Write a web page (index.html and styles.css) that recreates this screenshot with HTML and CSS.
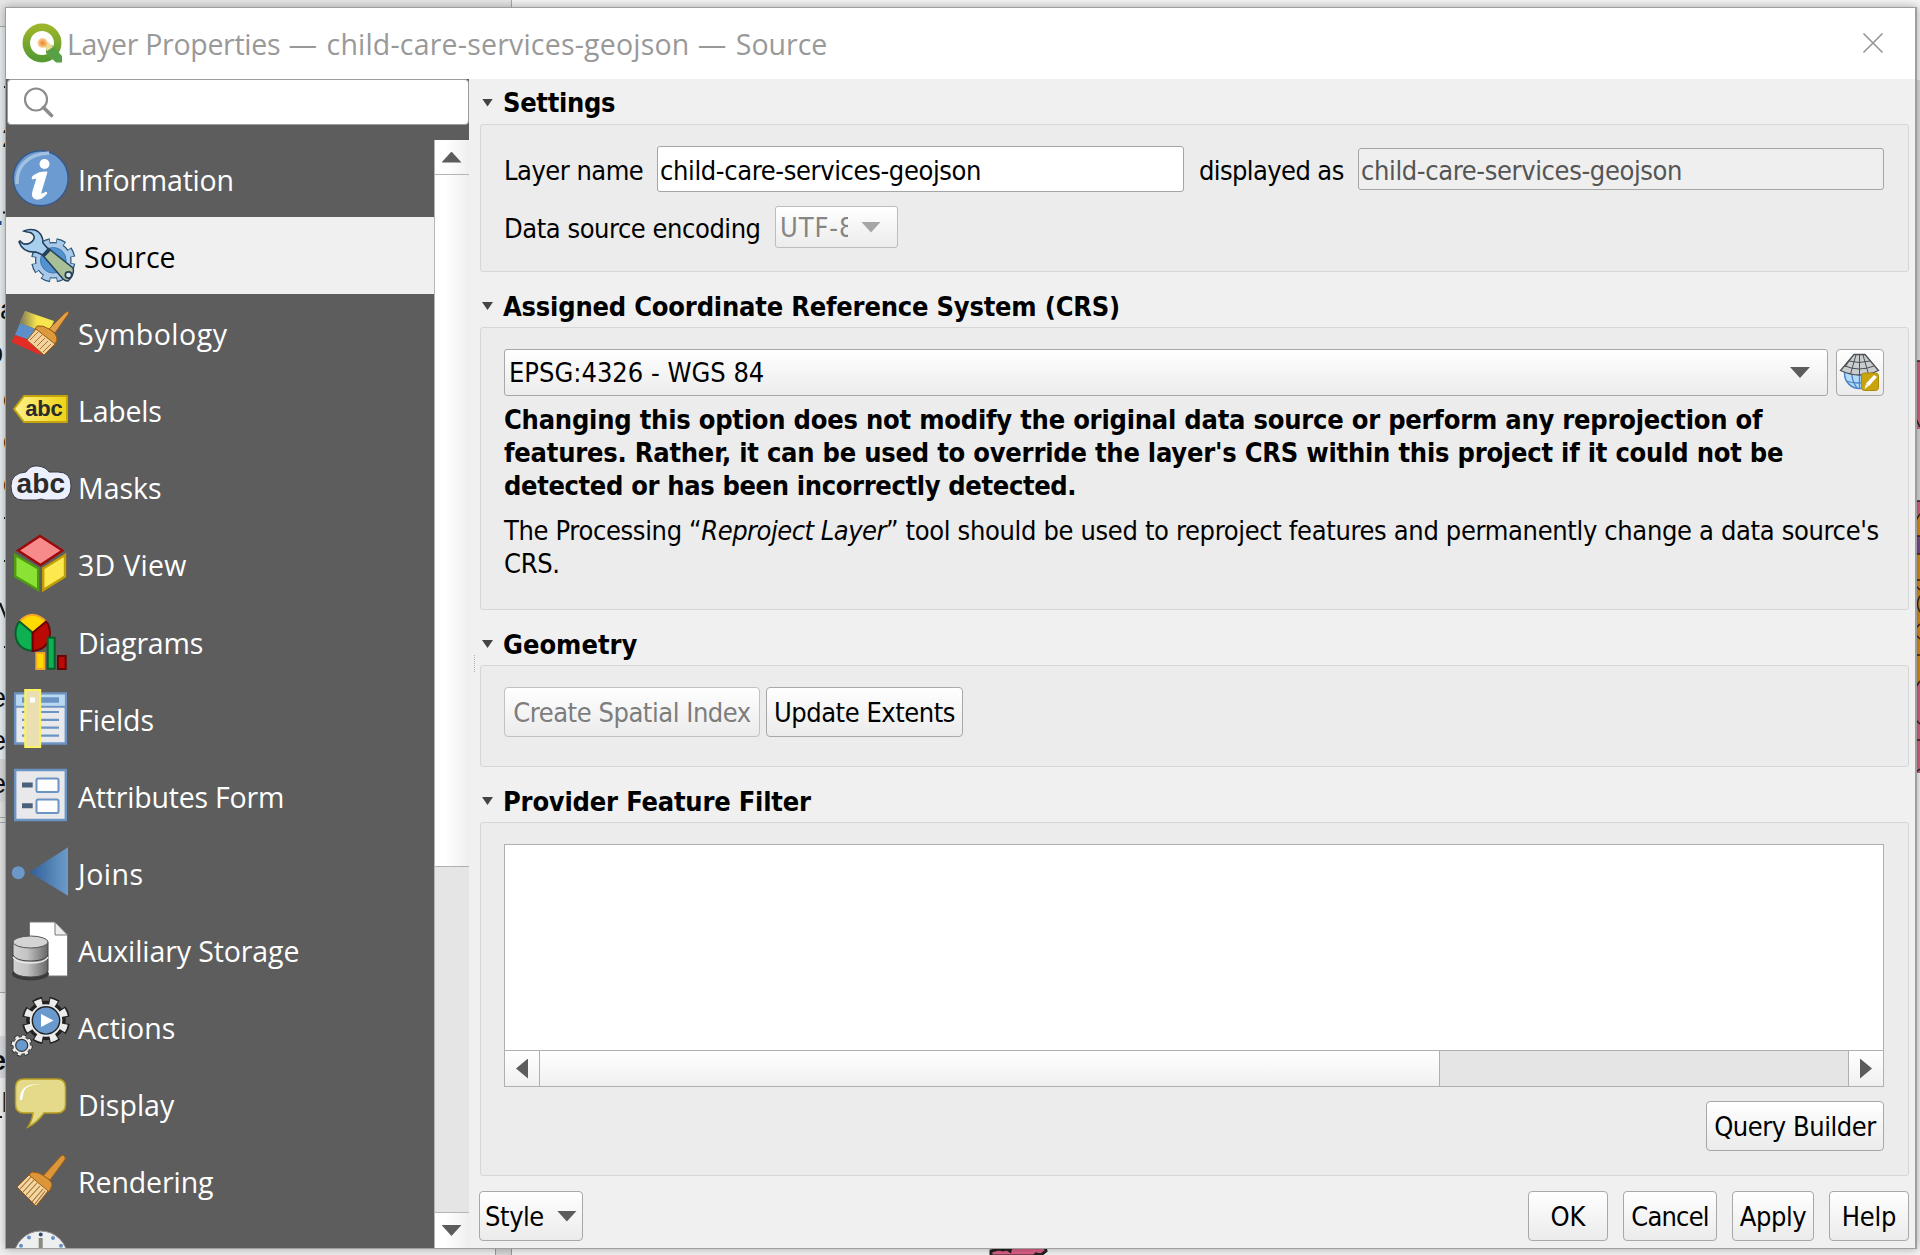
FILE: index.html
```html
<!DOCTYPE html>
<html lang="en">
<head>
<meta charset="utf-8">
<title>Layer Properties</title>
<link rel="stylesheet" href="styles.css">
</head>
<body>
<div class="desktop">
  <svg class="backdrop" width="1920" height="1255" viewBox="0 0 1920 1255">
    <rect width="1920" height="1255" fill="#f4f4f4"/>
    <rect width="511" height="26" fill="#e6e6e6"/>
    <path d="M0 26.500H511M511.500 0V26" stroke="#a8a8a8"/>
    <rect y="27" width="6" height="740" fill="#e9eff2"/>
    <rect y="759" width="6" height="43" fill="#dcdcdc"/>
    <rect y="802" width="6" height="190" fill="#e6e6e6"/>
    <path d="M0 817.500H6M0 822.500H6M0 992.500H6" stroke="#aaa"/>
    <rect y="1036" width="6" height="42" fill="#dcdde2"/>
    <path d="M4 87h2M3 212.500h3M4 518h2M4 561h2M4 647h2M0 1117h2" stroke="#1a1a1a" stroke-width="2"/>
    <path d="M0 223h1.500" stroke="#1d4e89" stroke-width="4"/>
    <path d="M0 603l6 15" stroke="#1a1a1a" stroke-width="2.200"/>
    <path d="M4.500 1092v20" stroke="#3a2a22" stroke-width="2"/>
    <path d="M0 1248H495V1255H0z" fill="#f0f0f0"/>
    <path d="M495 1248h16v7h-16z" fill="#d8d8d8"/>
    <path d="M495.500 1248v7M511.500 1248v7" stroke="#999"/>
    <path d="M991 1256l0-5 8-2 4 1 4-1 3 2 1-4h34l1 4-5 4-5-1-2 2z" fill="#db6186" stroke="#222" stroke-width="3"/>
    <rect x="1916" y="80" width="4" height="280" fill="#dadddd"/>
    <rect x="1916" y="361" width="4" height="412" fill="#d4607f"/>
    <rect x="1916" y="429" width="4" height="72" fill="#d3dad8"/>
    <rect x="1916" y="502" width="4" height="180" fill="#d58a1b"/>
    <rect x="1916" y="502" width="4" height="12" fill="#d4607f"/>
    <rect x="1916" y="536" width="4" height="18" fill="#7a4a92"/>
    <path d="M1916 361h4M1916 419l4 8M1916 501h4M1916 520l4-6M1916 536h4M1916 554h4M1916 580h4M1916 586l4 4M1920 596q-5 8 0 16M1916 628l4-4M1916 635l4 4M1916 655h4M1916 687l4-6M1916 720l4 4M1916 740h4M1916 772l4-3" stroke="#33231a" stroke-width="1.500" fill="none"/>
  </svg>
  <div class="peek">
    <span style="top:121px;left:2px">2</span>
    <span style="top:293px;left:0">a</span><span style="top:336px;left:-12px">p</span>
    <span style="top:382px;left:3px">c</span><span style="top:424px;left:3px">c</span><span style="top:467px;left:3px">c</span>
    <span style="top:681px;left:-9px">e</span><span style="top:724px;left:-9px">e</span><span style="top:767px;left:-9px">e</span><span style="top:1044px;left:-9px" class="strong">e</span>
  </div>
</div>

<main class="dialog">
  <header class="titlebar">
    <svg class="logo" width="42" height="42" viewBox="0 0 42 42">
      <defs><linearGradient id="q" x1="0" y1="0" x2="0" y2="1"><stop offset="0" stop-color="#9bb52a"/><stop offset="1" stop-color="#569b32"/></linearGradient>
      <radialGradient id="o"><stop offset="0" stop-color="#ee7925"/><stop offset="1" stop-color="#f6b65c" stop-opacity=".6"/></radialGradient></defs>
      <circle cx="21" cy="20" r="15.700" fill="none" stroke="url(#q)" stroke-width="7.500"/>
      <path d="M21 24l5-5 15 14v7h-6z" fill="#fff"/>
      <path d="M25 24.500l6-2.500 10 11V39.500h-6L25 30z" fill="#57a045"/>
      <path d="M22 21l5-2 5 5-6 4z" fill="#f0dc98"/>
      <circle cx="21.500" cy="20" r="5" fill="url(#o)"/>
    </svg>
    <h1 class="title"><span class="t-name">Layer Properties</span><span class="t-dash"> — </span><span class="t-layer">child-care-services-geojson</span><span class="t-dash"> — </span>Source</h1>
    <svg class="close" width="22" height="22" viewBox="0 0 22 22"><path d="M1.500 1.500l19 19M20.500 1.500l-19 19" stroke="#949494" stroke-width="1.600"/></svg>
  </header>

  <div class="content">
    <aside class="sidebar">
      <div class="search">
        <svg width="32" height="32" viewBox="0 0 32 32" fill="none" stroke="#8c8c8c"><circle cx="13" cy="12.500" r="11" stroke-width="2.200"/><path d="M20.500 20.500l8 8" stroke-width="3.600" stroke-linecap="round"/></svg>
      </div>
      <div class="navwrap">
        <nav class="nav">
          <a class="item tight"><svg class="ico" viewBox="0 0 72 77"><circle cx="34.700" cy="38.300" r="27.500" fill="#6b9bd0" stroke="#38598c" stroke-width="1.500"/><path d="M11 44C10 27 21 14 43 13" stroke="#a3c1e2" stroke-width="3.500" fill="none"/><circle cx="38.500" cy="24" r="5" fill="#fff"/><path d="M27 36q7-5 14-4l-6 20q-1 4 5 0l1 1q-5 7-11 6-5-1-3-8l4-13-5 1z" fill="#fff" stroke="#fff"/></svg><span>Information</span></a>
          <a class="item selected"><svg class="ico" viewBox="0 0 72 77"><g fill="none"><circle cx="47.300" cy="43.300" r="18.500" stroke="#2c5878" stroke-width="7.500" pathLength="80" stroke-dasharray="5.800 4.200" stroke-dashoffset="-2"/><circle cx="47.300" cy="43.300" r="17.700" fill="#a9c9ea" stroke="#2c5878" stroke-width="1.200"/><circle cx="47.300" cy="43.300" r="18.200" stroke="#a9c9ea" stroke-width="5.500" pathLength="80" stroke-dasharray="4.800 5.200" stroke-dashoffset="-2.500"/></g><circle cx="47.300" cy="43.300" r="12.800" fill="#5292cf" stroke="#3f79b4"/><path d="M18 14q5-2.500 11-1 8 3 8 13l6 7-6 5-7-3q-13 1-17-10l1-1q4 5 10 2 5-3 4-7-2-4-7-4z" fill="#a8cfee" stroke="#24405c" stroke-width="1.600"/><path d="M36.500 38l6-6.500L67 51q2 6-5 13-3 0-5-2z" fill="#a9bf95" stroke="#24405c" stroke-width="1.500"/><path d="M36 38l6.500-7 3 2-7 7z" fill="#24405c"/><circle cx="62.500" cy="58" r="3.200" fill="#dce9ee" stroke="#24405c" stroke-width="1.700"/></svg><span>Source</span></a>
          <a class="item loose"><svg class="ico" viewBox="0 0 72 77"><defs><linearGradient id="fl" x1="0" y1="0" x2="1" y2="0"><stop offset="0" stop-color="#5d5d5d"/><stop offset=".5" stop-color="#5d5d5d" stop-opacity="0"/></linearGradient></defs><path d="M19 17l29 10-6 13-28-11z" fill="#f8e44c"/><path d="M14 29l28 11-4 11L9 41z" fill="#5d8fc9"/><path d="M9 41l29 10-4 10L5.500 48z" fill="#e22c26"/><path d="M19 17l29 10-6 13-28-11z" fill="url(#fl)" opacity=".8"/><path d="M59 19q3-3 4 0L49 39l-6-4z" fill="#e0a14a" stroke="#9a5a13"/><path d="M31 32q6-1 12 3 8 4 8 11l-3 6-20-15z" fill="#dc9a3c" stroke="#9a5a13"/><path d="M30 35l19 15-11 11-17-15z" fill="#f2d39b" stroke="#9a5a13"/><path d="M24 46l8-8M28 49l8-8M31 52l8-8M34 55l8-8M37 58l8-8" stroke="#a9713a"/></svg><span>Symbology</span></a>
          <a class="item tight"><svg class="ico" viewBox="0 0 72 77"><defs><linearGradient id="tg"><stop offset="0" stop-color="#fdf18a"/><stop offset="1" stop-color="#efd315"/></linearGradient></defs><path d="M8 38l10-13h43v26H18z" fill="url(#tg)" stroke="#c5a30b" stroke-width="2" stroke-linejoin="round"/><text x="19.300" y="44.500" font-size="22" textLength="37.500" class="abc">abc</text></svg><span>Labels</span></a>
          <a class="item"><svg class="ico" viewBox="0 0 72 77"><path d="M17 51Q5 51 5 37 5 24 20 23q4-7 12-6 8 1 11 6h9q13 0 13 14T53 51H39q-4-2-8 0z" fill="#ecf0fd" stroke="#3a3c48"/><text x="10.500" y="44" font-size="28" textLength="48.500" class="abc">abc</text></svg><span>Masks</span></a>
          <a class="item wide"><svg class="ico" viewBox="0 0 72 77" stroke-width="2.400"><path d="M34 10l22.500 14.500L34.500 39 12 24.500z" fill="#f78b8b" stroke="#9a0a0a"/><path d="M9.200 29l23 13.500V64l-23-13.500z" fill="#8ae234" stroke="#4e9a12"/><path d="M59 29L37.200 42.500V64L59 50.500z" fill="#fce94f" stroke="#c09d07"/></svg><span>3D View</span></a>
          <a class="item tight low"><svg class="ico" viewBox="0 0 72 77" stroke-width="2"><path d="M26.700 29.800L13.500 18.500Q26 5 40 18.500z" fill="#ffd900" stroke="#f3a62a"/><path d="M26.700 29.800V48Q9 46 9.500 29 10 22 13.500 18.500z" fill="#0fb052" stroke="#075f2a"/><path d="M26.700 29.800V48Q44 46 44 29 43.500 22 40 18.500z" fill="#bb0a04" stroke="#650605"/><path d="M30.300 50h8v16h-8z" fill="#ffd900" stroke="#f3a62a"/><path d="M41.700 34.800h7v31h-7z" fill="#0fb052" stroke="#075f2a"/><path d="M52 53h7.700v13H52z" fill="#bb0a04" stroke="#650605"/></svg><span>Diagrams</span></a>
          <a class="item"><svg class="ico" viewBox="0 0 72 77"><path d="M9.200 13.500h50.600v50H9.200z" fill="#e9e9eb" stroke="#6b94c4" stroke-width="2.400"/><path d="M10.400 14.700h48.200v11H10.400z" fill="#b8d9f2"/><path d="M9 26.700h51" stroke="#6b94c4" stroke-width="2"/><path d="M16 20h37" stroke="#6b94c4" stroke-width="5.500"/><path d="M16 32h37M16 39.800h37M16 47.700h37M16 55.600h37" stroke="#6b94c4" stroke-width="2.200"/><path d="M19.300 10h14.800v57H19.300z" fill="#eadfb0" stroke="#fbf25f" stroke-width="2.200"/><path d="M24 17.500h5v5h-5z" fill="#fff"/></svg><span>Fields</span></a>
          <a class="item tight"><svg class="ico" viewBox="0 0 72 77"><path d="M9.200 13h50.600v50H9.200z" fill="#e9e9eb" stroke="#6b94c4" stroke-width="2.400"/><g fill="#fdfdfd" stroke="#6b94c4" stroke-width="2"><rect x="30.500" y="21.500" width="22" height="13.500" rx="1.500"/><rect x="30.500" y="42.500" width="22" height="13.500" rx="1.500"/></g><path d="M16 28h10.700M16 48.800h10.700" stroke="#4b617b" stroke-width="5"/></svg><span>Attributes Form</span></a>
          <a class="item loose"><svg class="ico" viewBox="0 0 72 77"><defs><linearGradient id="jn"><stop offset="0" stop-color="#2f5e96"/><stop offset="1" stop-color="#6d9ccb"/></linearGradient></defs><circle cx="12.300" cy="38.700" r="6.500" fill="#6b98c8"/><path d="M23.300 38.300L62 13.300v48.500z" fill="url(#jn)"/></svg><span>Joins</span></a>
          <a class="item snug"><svg class="ico" viewBox="0 0 72 77"><defs><linearGradient id="cy"><stop offset="0" stop-color="#d2d2d2"/><stop offset=".4" stop-color="#c4c4c4"/><stop offset="1" stop-color="#666"/></linearGradient></defs><path d="M23.500 11H49l12.500 13v41h-38z" fill="#fff" stroke="#767676"/><path d="M49 11v13h12.500z" fill="#ededed" stroke="#777"/><ellipse cx="24.500" cy="63" rx="18.500" ry="6.500" fill="#3b3b3b"/><path d="M7 31v29q3 6 17.500 6T42 60V31z" fill="url(#cy)" stroke="#444"/><path d="M7 46q3 6 17.500 6T42 46" fill="none" stroke="#eee" stroke-width="1.500"/><path d="M7 44q3 6 17.500 6T42 44" fill="none" stroke="#444"/><ellipse cx="24.500" cy="31" rx="17.500" ry="6" fill="#d4d4d4" stroke="#555"/></svg><span>Auxiliary Storage</span></a>
          <a class="item"><svg class="ico" viewBox="0 0 72 77"><g fill="none"><circle cx="40" cy="31.400" r="19.500" stroke="#222" stroke-width="9" pathLength="80" stroke-dasharray="5.800 4.200" stroke-dashoffset="-2"/><circle cx="40" cy="31.400" r="18" fill="#ececec" stroke="#222" stroke-width="3.500"/><circle cx="40" cy="31.400" r="19" stroke="#ececec" stroke-width="6.500" pathLength="80" stroke-dasharray="4.600 5.400" stroke-dashoffset="-2.600"/></g><circle cx="40" cy="31.400" r="13.700" fill="#6a9acd" stroke="#222" stroke-width="1.400"/><path d="M35 25l12.500 6.500L35 38z" fill="#fff"/><circle cx="15.700" cy="56.400" r="9" fill="none" stroke="#222" stroke-width="4" pathLength="80" stroke-dasharray="6 4"/><circle cx="15.700" cy="56.400" r="8.700" fill="#ececec" stroke="#222" stroke-width=".6"/><circle cx="15.700" cy="56.400" r="8.500" fill="none" stroke="#ececec" stroke-width="3.400" pathLength="80" stroke-dasharray="5 5" stroke-dashoffset="-.5"/><circle cx="15.700" cy="56.400" r="6" fill="#6a9acd" stroke="#333" stroke-width="1.200"/></svg><span>Actions</span></a>
          <a class="item"><svg class="ico" viewBox="0 0 72 77"><path d="M18 13h33q8.500 0 8.500 8.500v17q0 8.500-8.500 8.500H38q-7 10-16 14 4-6 5-14h-9q-8.500 0-8.500-8.500v-17Q9.500 13 18 13z" fill="#e5da89" stroke="#b79c1e" stroke-width="1.500"/><path d="M14 34q-1-17 21-16-15 1-17 7l-2 9z" fill="#fff"/></svg><span>Display</span></a>
          <a class="item snug"><svg class="ico" viewBox="0 0 72 77"><path d="M55 13q3-2 4 1 1 2-1 4L44 37l-7-4z" fill="#dd953a" stroke="#9c5d12"/><path d="M26 29q7 0 12 4 8 5 8 9-1 5-4 7L22 33z" fill="#dd953a" stroke="#9c5d12"/><path d="M23 32l19 16-12 15-19-19z" fill="#f3d6a0" stroke="#9c5d12"/><path d="M14 46l11-12M17 49l11-12M20 52l11-12M23 55l11-12M26 59l11-13M29 61l10-13" stroke="#a06c35" stroke-width="1.100"/></svg><span>Rendering</span></a>
          <a class="item"><svg class="ico" viewBox="0 0 72 77"><circle cx="34.700" cy="38" r="27" fill="#eeefef" stroke="#8e8e8e"/><path d="M34.700 18v20" stroke="#878a80" stroke-width="4"/><g fill="#6590c4"><circle cx="34.700" cy="14.500" r="2" fill="#2c4a72"/><circle cx="23" cy="17.500" r="2"/><circle cx="47" cy="18" r="2"/><circle cx="15" cy="25.700" r="2"/><circle cx="55" cy="25.700" r="2"/></g></svg></a>
        </nav>
        <div class="vscroll">
          <div class="vbtn up"><i class="tri tri-up"></i></div>
          <div class="vthumb"></div>
          <div class="vgroove"></div>
          <div class="vbtn down"><i class="tri tri-down"></i></div>
        </div>
      </div>
    </aside>
    <div class="splitter"><i></i></div>

    <section class="pane">
      <h2 class="head first"><i class="fold"></i><span>Settings</span></h2>
      <div class="group g-settings">
        <div class="row">
          <label class="lname">Layer name</label>
          <div class="field name"><span>child-care-services-geojson</span></div>
          <label class="ldisp">displayed as</label>
          <div class="field shown"><span>child-care-services-geojson</span></div>
        </div>
        <div class="row enc">
          <label>Data source encoding</label>
          <div class="combo small"><span class="clip">UTF-8</span><i class="tri tri-down pale"></i></div>
        </div>
      </div>

      <h2 class="head"><i class="fold"></i><span>Assigned Coordinate Reference System (CRS)</span></h2>
      <div class="group g-crs">
        <div class="row">
          <div class="combo crs"><span>EPSG:4326 - WGS 84</span><i class="tri tri-down"></i></div>
          <button class="btn globe" aria-label="Select CRS"><svg width="42" height="40" viewBox="0 0 42 40"><circle cx="20.500" cy="20.500" r="15" fill="#b5dbfa" stroke="#4c85c4" stroke-width="1.500"/><path d="M20.500 18v17M13 18q-1 9 5 17M28 18q0 6-3 10M7 28q12 4 24 0" stroke="#4c85c4" fill="none" stroke-width="1.300"/><path d="M15 1.500h11L39.500 17.500q-19 9-38 0z" fill="#c9cdcf" stroke="#4a5054" stroke-width="1.300"/><path d="M20.500 2v20.500M17 2l-5.500 19M24 2l5.500 19M12 5l-6 9M10 8q10 3 21 0M6 13q14 6 29 0" stroke="#4a5054" fill="none"/><rect x="22.500" y="20" width="17" height="17.500" rx="3" fill="#c9a40d" stroke="#ab8a08"/><path d="M35 22l3 2-8 9-3-2.500zM27 31l2.500 2L25.500 36z" fill="#fff"/></svg></button>
        </div>
        <p class="warn"><span>Changing this option does not modify the original data source or perform any reprojection of</span><br><span>features. Rather, it can be used to override the layer's CRS within this project if it could not be</span><br><span class="last">detected or has been incorrectly detected.</span></p>
        <p class="note">The Processing “<em>Reproject Layer</em>” tool should be used to reproject features and permanently change a data source's<br>CRS.</p>
      </div>

      <h2 class="head geom"><i class="fold"></i><span>Geometry</span></h2>
      <div class="group g-geom">
        <div class="row">
          <button class="btn create" disabled>Create Spatial Index</button>
          <button class="btn update">Update Extents</button>
        </div>
      </div>

      <h2 class="head"><i class="fold"></i><span>Provider Feature Filter</span></h2>
      <div class="group g-filter">
        <div class="editor">
          <div class="paper"></div>
          <div class="hscroll">
            <div class="hbtn left"><i class="tri tri-left"></i></div>
            <div class="hthumb"></div>
            <div class="hgroove"></div>
            <div class="hbtn right"><i class="tri tri-right"></i></div>
          </div>
        </div>
        <button class="btn query">Query Builder</button>
      </div>

      <footer class="actions">
        <button class="btn style"><span>Style</span><i class="tri tri-down"></i></button>
        <button class="btn ok">OK</button>
        <button class="btn cancel">Cancel</button>
        <button class="btn apply">Apply</button>
        <button class="btn help">Help</button>
      </footer>
    </section>
  </div>
</main>
</body>
</html>
```
FILE: styles.css
```css
* { box-sizing: border-box; }
body { margin: 0; width: 1920px; height: 1255px; overflow: hidden; background: #f4f4f4; color: #000; font-family: "DejaVu Sans Condensed", "DejaVu Sans", sans-serif; font-stretch: condensed; font-size: 27px; }
h1, h2, p { margin: 0; }
button { font: inherit; color: inherit; letter-spacing: -.45px; }

.desktop { position: absolute; inset: 0; overflow: hidden; }
.backdrop { display: block; }
.peek { position: absolute; left: 0; top: 0; width: 6px; height: 1255px; overflow: hidden; color: #111; font: 27px/34px "Liberation Sans", sans-serif; }
.peek span { position: absolute; }
.peek .strong { font-weight: bold; }

.dialog { position: absolute; left: 5px; top: 7px; width: 1912px; height: 1242px; border: 1px solid #9e9e9e; border-right-width: 2px; background: #f0f0f0; box-shadow: 0 0 9px rgba(0, 0, 0, .32); display: flex; flex-direction: column; }
.titlebar { height: 71px; flex: none; background: #fff; display: flex; align-items: center; padding: 0 31px 0 15px; }
.logo { margin-right: 4px; flex: none; }
.title { flex: 1; font: 28.500px/40px "Open Sans", sans-serif; color: #999; white-space: pre; }
.t-name { letter-spacing: -.3px; }
.t-dash { letter-spacing: 1px; }
.t-layer { letter-spacing: .2px; }
.close { margin-top: -1px; }
.content { flex: 1; display: flex; min-height: 0; }

.sidebar { width: 463px; flex: none; background: #5d5d5d; display: flex; flex-direction: column; min-height: 0; }
.search { height: 46px; margin-left: 1px; background: #fff; border: 1px solid #9c9c9c; border-radius: 4px; padding: 7px 0 0 15px; flex: none; }
.navwrap { flex: 1; display: flex; margin-top: 15px; min-height: 0; }
.nav { width: 428px; overflow: hidden; }
.item { display: flex; align-items: center; height: 77.150px; color: #fff; font: 28.500px/40px "Open Sans", sans-serif; white-space: nowrap; }
.item span { padding-top: 2px; }
.item.tight { letter-spacing: -.2px; }
.item.snug { letter-spacing: -.1px; }
.item.wide { letter-spacing: .3px; }
.item.loose { letter-spacing: .5px; }
.item.low span { padding-top: 4px; }
.ico { width: 72px; height: 77px; flex: none; }
.item.selected { background: #f0f0f0; color: #000; }
.item.selected span { margin-left: 6px; }
.abc { font-family: "Liberation Sans", sans-serif; font-weight: bold; fill: #2b2b2b; letter-spacing: 0; }

.vscroll { width: 35px; border-left: 1px solid #b5b5b5; display: flex; flex-direction: column; }
.vbtn { height: 35px; flex: none; display: flex; align-items: center; justify-content: center; padding-right: 1px; background: linear-gradient(90deg, #fff 30%, #efefef); }
.vbtn.up { border-bottom: 1px solid #b5b5b5; }
.vthumb { height: 692px; flex: none; background: linear-gradient(90deg, #fff 30%, #efefef); border-bottom: 1px solid #b0b0b0; }
.vgroove { flex: 1; background: #e5e5e5; border-bottom: 1px solid #b5b5b5; }

.tri { flex: none; display: block; background: #5c5c5c; width: 20px; height: 11px; }
.tri-up { clip-path: polygon(50% 0, 100% 100%, 0 100%); }
.tri-down { clip-path: polygon(0 0, 100% 0, 50% 100%); }
.tri-left { width: 12px; height: 20px; clip-path: polygon(100% 0, 100% 100%, 0 50%); }
.tri-right { width: 12px; height: 20px; clip-path: polygon(0 0, 100% 50%, 0 100%); }
.tri.pale { background: #a6a6a6; }

.splitter { width: 11px; flex: none; display: flex; align-items: center; }
.splitter i { margin-left: 5px; height: 17px; border-left: 1px dotted #b0b0b0; }

.pane { width: 1429px; flex: none; display: flex; flex-direction: column; }
.head { height: 55px; padding: 13px 0 0 2px; flex: none; display: flex; align-items: center; gap: 10px; font-size: 27px; font-weight: bold; letter-spacing: -.2px; white-space: nowrap; }
.head.first { height: 45px; padding-top: 2px; letter-spacing: -.3px; }
.head.geom { letter-spacing: 0; }
.fold { width: 11px; height: 8px; background: #444; clip-path: polygon(0 0, 100% 0, 50% 100%); }
.group { flex: none; border: 1px solid #d6d6d6; border-radius: 3px; background: #ececec; padding: 21px 24px 0 23px; }
.g-settings { height: 148px; }
.g-crs { height: 283px; }
.g-geom { height: 102px; }
.g-filter { height: 354px; display: flex; flex-direction: column; }
.row { display: flex; align-items: center; white-space: nowrap; }
.row label { flex: none; padding-top: 2px; letter-spacing: -.5px; }
.row .lname { width: 153px; }
.field { flex: none; height: 46px; border: 1px solid #a5a5a5; border-radius: 3px; display: flex; align-items: center; padding: 2px 0 0 2px; letter-spacing: -.37px; }
.name { width: 527px; background: #fff; }
.row .ldisp { margin-left: 15px; width: 159px; letter-spacing: -.6px; }
.shown { width: 526px; height: 42px; background: #efefef; color: #555; }
.enc { margin-top: 14px; }
.row.enc label { width: 271px; letter-spacing: -.45px; }
.combo { flex: none; display: flex; align-items: center; border: 1px solid #a8a8a8; border-radius: 3px; background: linear-gradient(#fff, #ececec); }
.small { width: 123px; height: 42px; border-color: #bdbdbd; color: #858585; padding-left: 4px; }
.small .clip { width: 68px; overflow: hidden; margin-right: 13px; padding-top: 1px; letter-spacing: .9px; }
.crs { width: 1324px; height: 47px; padding: 0 17px 0 4px; justify-content: space-between; margin-right: 8px; }
.btn { flex: none; height: 50px; border: 1px solid #a8a8a8; border-radius: 4px; background: linear-gradient(#fff, #ebebeb); display: flex; align-items: center; justify-content: center; padding: 0; white-space: nowrap; }
.btn:disabled { color: #7d7d7d; border-color: #c2c2c2; }
.globe { width: 48px; height: 47px; }
.warn { font-weight: bold; line-height: 33px; letter-spacing: -.22px; margin-top: 7px; white-space: nowrap; }
.warn .last { letter-spacing: -.35px; }
.note { line-height: 33px; margin-top: 12px; letter-spacing: -.34px; white-space: nowrap; }
.note em { letter-spacing: -.5px; }
.create { width: 256px; margin-right: 6px; }
.update { width: 197px; }
.editor { flex: none; height: 243px; border: 1px solid #b0b0b0; background: #fff; display: flex; flex-direction: column; }
.paper { flex: 1; }
.hscroll { height: 36px; border-top: 1px solid #b0b0b0; display: flex; }
.hbtn { width: 35px; display: flex; align-items: center; justify-content: center; background: linear-gradient(#fff, #f0f0f0); }
.hbtn.left { border-right: 1px solid #b0b0b0; }
.hbtn.right { border-left: 1px solid #b0b0b0; }
.hthumb { width: 900px; background: linear-gradient(#fff, #f0f0f0); border-right: 1px solid #b0b0b0; }
.hgroove { flex: 1; background: #e5e5e5; }
.query { width: 178px; margin-top: 14px; align-self: flex-end; }
.actions { display: flex; margin: 15px 0 0 -1px; }
.style { width: 104px; margin-right: auto; gap: 13px; }
.ok { width: 80px; margin-right: 15px; letter-spacing: 0; }
.cancel { width: 94px; margin-right: 15px; letter-spacing: -.8px; }
.apply { width: 82px; margin-right: 15px; }
.help { width: 80px; letter-spacing: -.2px; }
```
